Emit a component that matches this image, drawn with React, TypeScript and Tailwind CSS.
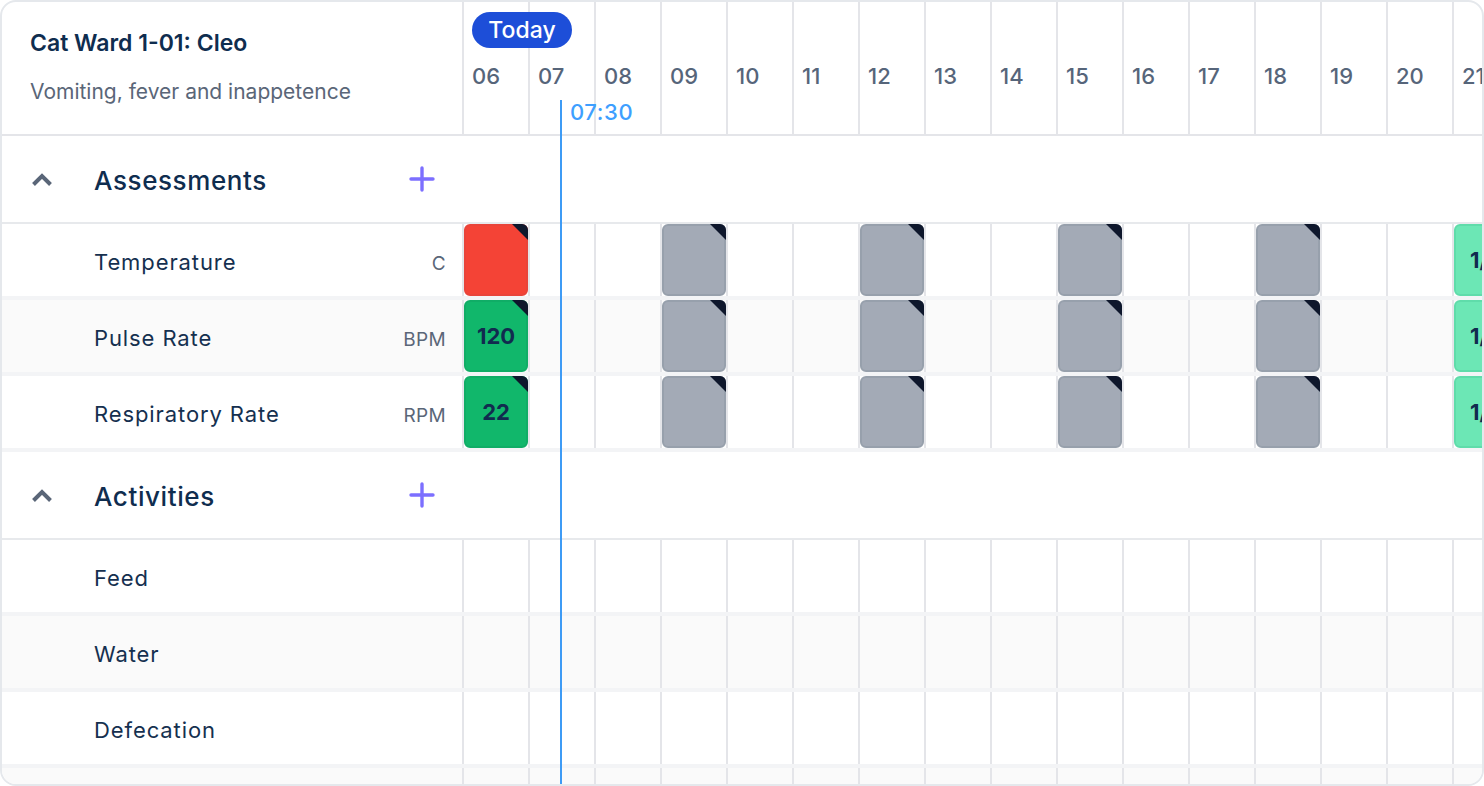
const hours = ['06', '07', '08', '09', '10', '11', '12', '13', '14', '15', '16', '17', '18', '19', '20', '21'];

type Slot = { tone: string; value?: string };

function assessmentSlots(first: Slot): Record<number, Slot> {
  const grey = { tone: 'bg-[#a3aab6] border-[#97a0ac]' };
  return {
    0: first,
    3: grey,
    6: grey,
    9: grey,
    12: grey,
    15: { tone: 'bg-[#6ce7b5] border-[#5fdcaa]', value: '1/2' },
  };
}

function Chevron() {
  return (
    <svg width="20" height="14" viewBox="0 0 20 14" fill="none" className="shrink-0">
      <path d="M1.5 12.5 L10 4 L18.5 12.5" stroke="#5a6678" strokeWidth="4" />
    </svg>
  );
}

function Plus() {
  return (
    <svg width="26" height="26" viewBox="0 0 26 26" fill="none">
      <path d="M13 2 V24 M2 13 H24" stroke="#7c6fff" strokeWidth="3.4" strokeLinecap="round" />
    </svg>
  );
}

function Section({ title }: { title: string }) {
  return (
    <div className="flex h-[88px] shrink-0 items-center border-b-2 border-[#e7e9ec] bg-white">
      <div className="flex w-[30px] shrink-0" />
      <Chevron />
      <div className="ml-[42px] w-[315px] pt-[2px] text-[26px] font-medium tracking-[0.6px] text-[#0f2d4f]">{title}</div>
      <Plus />
    </div>
  );
}

function Row({ label, unit, alt, slots }: { label: string; unit?: string; alt?: boolean; slots?: Record<number, Slot> }) {
  return (
    <div className={`flex h-[76px] shrink-0 border-b-4 border-[#f3f4f6] ${alt ? 'bg-[#fafafa]' : 'bg-white'}`}>
      <div className="flex w-[460px] shrink-0 items-center justify-between pl-[92px] pr-[16px] pt-[4px]">
        <span className="text-[22px] tracking-[0.9px] text-[#15304f]">{label}</span>
        {unit && <span className="mt-[4px] text-[19px] tracking-[0.3px] text-[#5a6678]">{unit}</span>}
      </div>
      {hours.map((hour, i) => {
        const slot = slots?.[i];
        return (
          <div key={hour} className="w-[66px] shrink-0 border-l-2 border-[#e4e5e9]">
            {slot && (
              <div className={`relative flex h-full w-[64px] items-center justify-center rounded-md border-2 ${slot.tone}`}>
                <svg width="16" height="16" viewBox="0 0 16 16" className="absolute -right-[2px] -top-[2px] rounded-tr-md">
                  <path d="M0 0 H16 V16 Z" fill="#0e172c" />
                </svg>
                {slot.value && <span className="whitespace-nowrap text-[22px] font-bold text-[#112b4f]">{slot.value}</span>}
              </div>
            )}
          </div>
        );
      })}
    </div>
  );
}

export default function App() {
  return (
    <div className="relative flex h-[786px] w-[1484px] flex-col overflow-hidden rounded-2xl border-2 border-[#e5e8ec] bg-white font-['Inter',sans-serif]">
      <div className="flex h-[134px] shrink-0 border-b-2 border-[#e4e5e9]">
        <div className="flex w-[460px] shrink-0 flex-col pl-[28px] pt-[26px]">
          <div className="text-[23px] font-semibold leading-[30px] text-[#0f2d4f]">Cat Ward 1-01: Cleo</div>
          <div className="mt-[19px] text-[21px] leading-[30px] text-[#5a6678]">Vomiting, fever and inappetence</div>
        </div>
        {hours.map((hour) => (
          <div key={hour} className="w-[66px] shrink-0 border-l-2 border-[#e4e5e9] pl-[8px] pt-[59px] text-[22px] font-medium leading-[30px] text-[#56657a]">
            {hour}
          </div>
        ))}
      </div>

      <Section title="Assessments" />
      <Row label="Temperature" unit="C" slots={assessmentSlots({ tone: 'bg-[#f44336] border-[#e9443a]' })} />
      <Row label="Pulse Rate" unit="BPM" alt slots={assessmentSlots({ tone: 'bg-[#11b76b] border-[#10ad66]', value: '120' })} />
      <Row label="Respiratory Rate" unit="RPM" slots={assessmentSlots({ tone: 'bg-[#11b76b] border-[#10ad66]', value: '22' })} />
      <Section title="Activities" />
      <Row label="Feed" />
      <Row label="Water" alt />
      <Row label="Defecation" />
      <Row label="" alt />

      {/* today pill and current time marker sit over the grid */}
      <div className="absolute left-[470px] top-[10px] flex h-[36px] w-[100px] items-center justify-center rounded-full bg-[#1d4ed8] text-[23px] font-medium text-white">
        Today
      </div>
      <div className="absolute bottom-0 left-[558px] top-[98px] w-[2px] bg-[#3e9bf5]" />
      <div className="absolute left-[568px] top-[95px] text-[22px] font-medium leading-[30px] tracking-[0.6px] text-[#3e9fff]">07:30</div>
    </div>
  );
}
